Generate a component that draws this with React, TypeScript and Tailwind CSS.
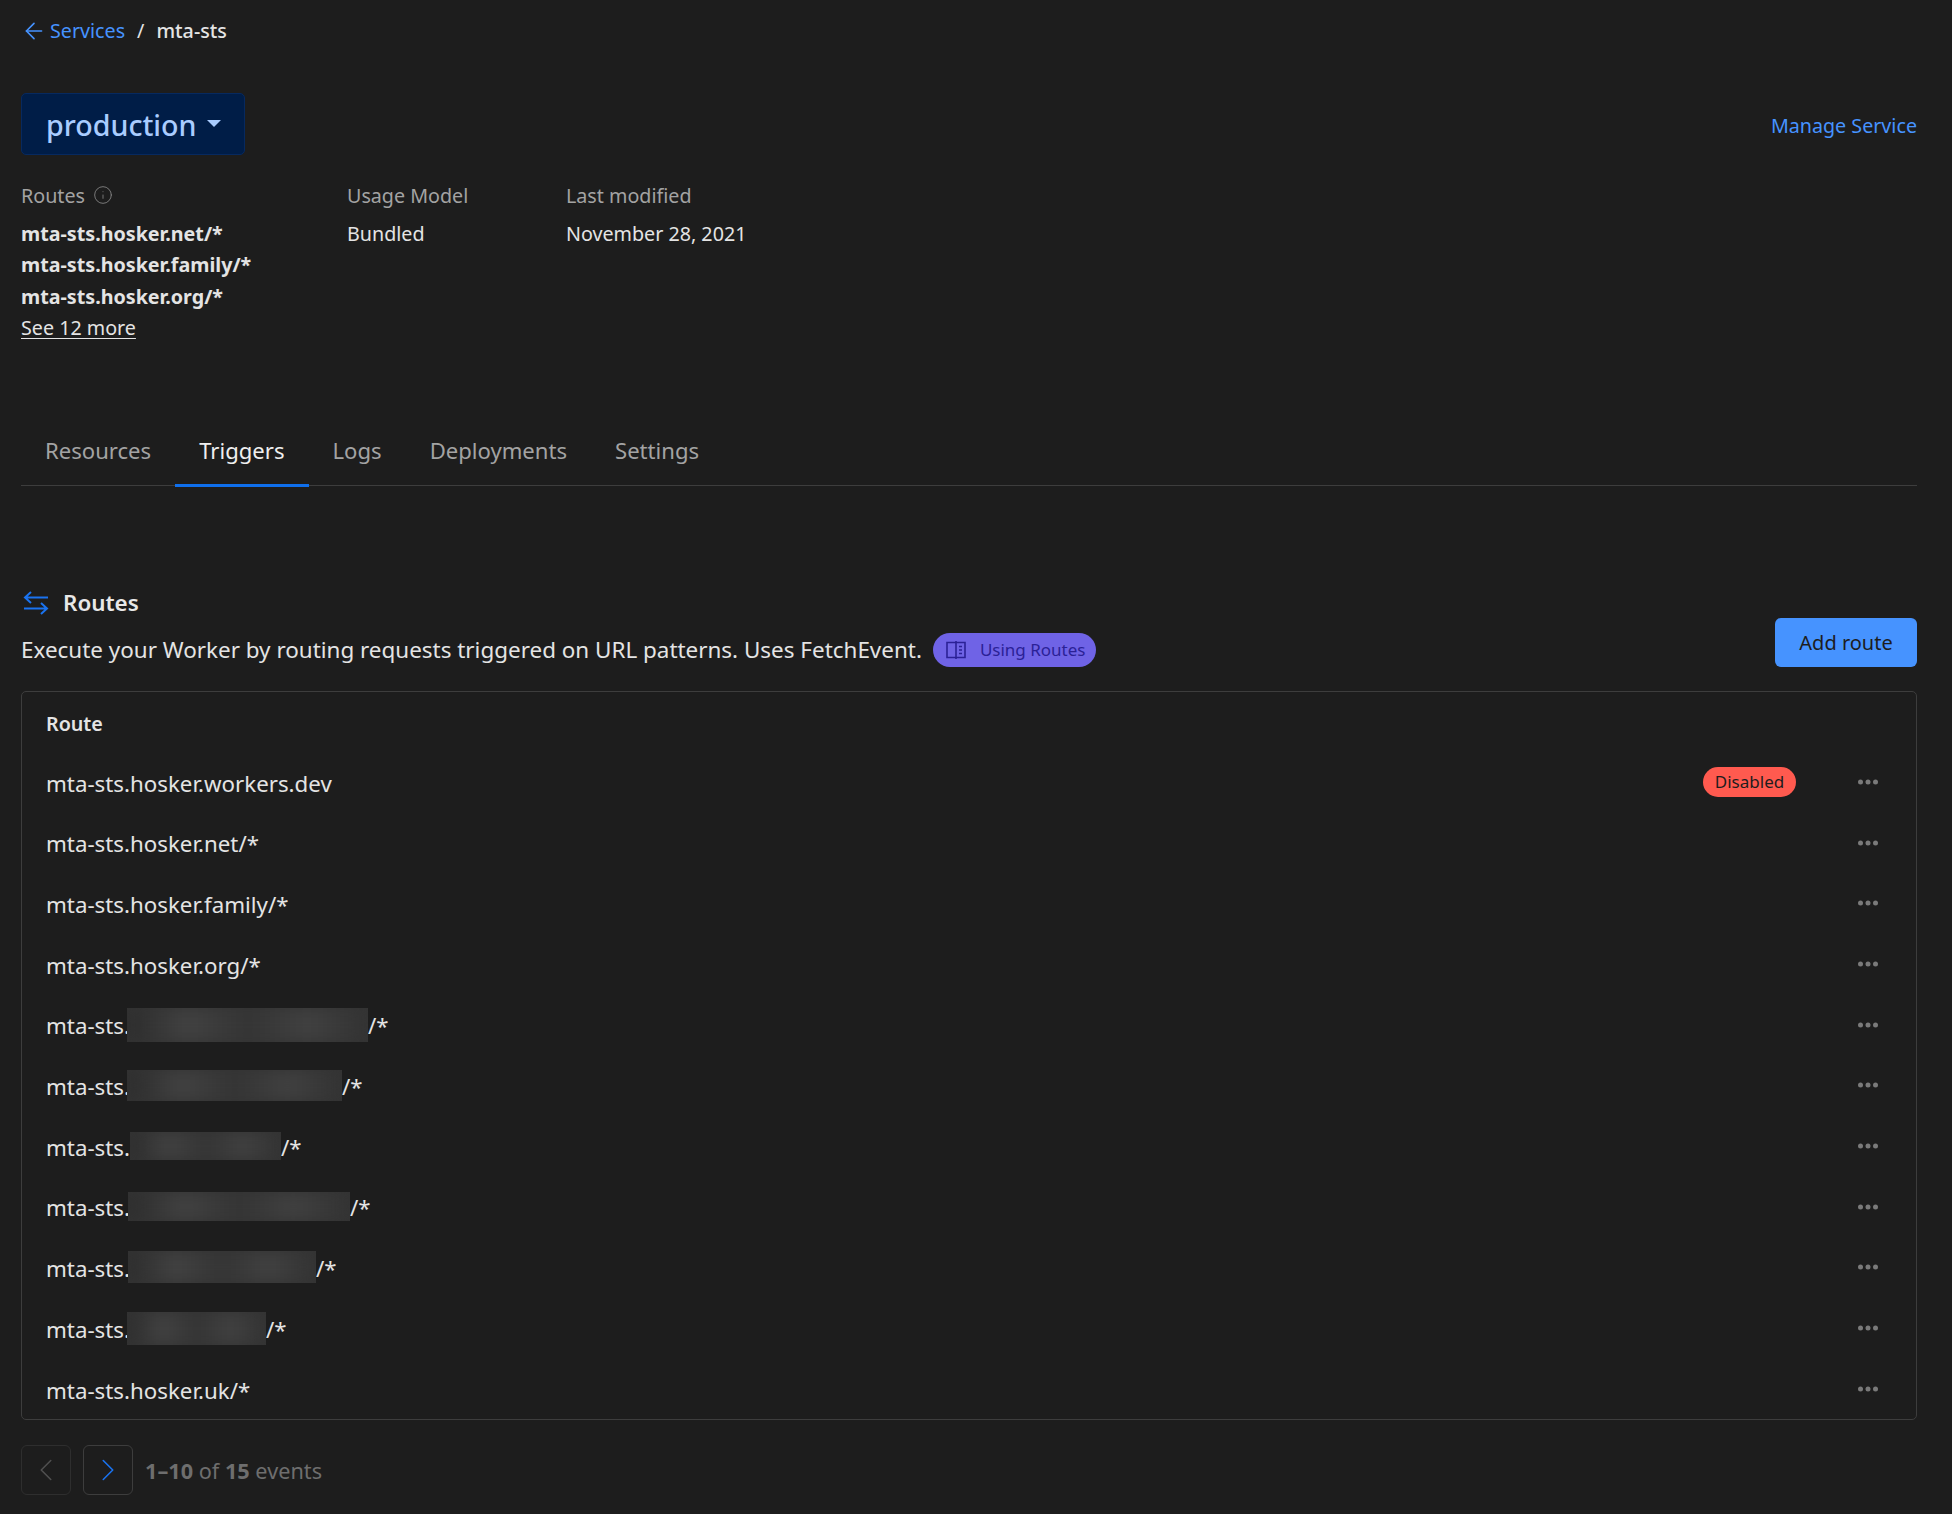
import { ArrowLeft, ChevronLeft, ChevronRight, Info } from "lucide-react";

const tabs = ["Resources", "Triggers", "Logs", "Deployments", "Settings"];

const routes: { prefix: string; blur?: string; badge?: boolean }[] = [
  { prefix: "mta-sts.hosker.workers.dev", badge: true },
  { prefix: "mta-sts.hosker.net/*" },
  { prefix: "mta-sts.hosker.family/*" },
  { prefix: "mta-sts.hosker.org/*" },
  { prefix: "mta-sts.", blur: "-ml-[3px] w-[241px] h-[34px]" },
  { prefix: "mta-sts.", blur: "-ml-[3px] w-[215px] h-[31px]" },
  { prefix: "mta-sts.", blur: "w-[151px] h-[28px]" },
  { prefix: "mta-sts.", blur: "-ml-[2px] w-[222px] h-[29px]" },
  { prefix: "mta-sts.", blur: "-ml-[2px] w-[188px] h-[32px]" },
  { prefix: "mta-sts.", blur: "-ml-[3px] w-[139px] h-[33px]" },
  { prefix: "mta-sts.hosker.uk/*" },
];

function RoutesIcon() {
  return (
    <svg width="26" height="24" viewBox="0 0 26 24" fill="none" stroke="#1a73f0" strokeWidth="2">
      <path d="M25 6.5H2M8 1L2 6.5L8 12" />
      <path d="M1 17.5H24M18 12L24 17.5L18 23" />
    </svg>
  );
}

function BookIcon() {
  return (
    <svg width="20" height="20" viewBox="0 0 20 20" fill="none" stroke="#2b2196" strokeWidth="1.6">
      <path d="M1 2.5H19V17.5H1Z" />
      <path d="M10 1V19" />
      <path d="M13 6.5H16M13 10H16M13 13.5H16" />
    </svg>
  );
}

function Dots() {
  return (
    <svg width="20" height="6" viewBox="0 0 20 6" fill="#7a7a7a">
      <circle cx="2.5" cy="3" r="2.5" />
      <circle cx="10" cy="3" r="2.5" />
      <circle cx="17.5" cy="3" r="2.5" />
    </svg>
  );
}

export default function App() {
  return (
    <div className="w-[1952px] h-[1514px] overflow-hidden bg-[#1d1d1d] pl-[21px] pr-[35px] font-['Noto_Sans',sans-serif] text-[19.7px] text-[#e4e4e4]">
      {/* Breadcrumb */}
      <div className="h-[93px] pt-[16px] flex items-start">
        <div className="flex items-center h-[30px]">
          <ArrowLeft size={26} strokeWidth={1.5} className="text-[#4693ff] mr-[3px]" />
          <span className="text-[#4693ff]">Services</span>
          <span className="mx-[12px]">/</span>
          <span className="font-medium">mta-sts</span>
        </div>
      </div>

      {/* Environment header */}
      <div className="flex items-center justify-between">
        <div className="h-[62px] w-[224px] flex items-center pl-[24px] pt-[2px] rounded-[5px] bg-[#001d47] border border-[#06295f] text-[#a9ccff] text-[28.6px] font-medium">
          production
          <span className="ml-[10px] mb-[4px] border-x-[7px] border-x-transparent border-t-[7px] border-t-[#a9ccff]" />
        </div>
        <a className="text-[#4693ff] pt-[4px]">Manage Service</a>
      </div>

      {/* Meta */}
      <div className="flex mt-[24px] leading-[31.5px]">
        <div className="w-[326px]">
          <div className="flex items-center text-[#a3a3a3] pt-[1px] mb-[6px]">
            Routes <Info size={20} strokeWidth={1} className="ml-[8px] mb-[2px] text-[#8a8a8a]" />
          </div>
          <div className="font-bold">mta-sts.hosker.net/*</div>
          <div className="font-bold">mta-sts.hosker.family/*</div>
          <div className="font-bold">mta-sts.hosker.org/*</div>
          <a className="underline underline-offset-[3px]">See 12 more</a>
        </div>
        <div className="w-[219px]">
          <div className="text-[#a3a3a3] pt-[1px] mb-[6px]">Usage Model</div>
          <div>Bundled</div>
        </div>
        <div>
          <div className="text-[#a3a3a3] pt-[1px] mb-[6px]">Last modified</div>
          <div>November 28, 2021</div>
        </div>
      </div>

      {/* Tabs */}
      <div className="mt-[70px] h-[72px] flex border-b border-[#3d3d3d] text-[22.1px] text-[#a3a3a3]">
        {tabs.map((t) => (
          <div
            key={t}
            className={`px-[24px] h-[73px] flex items-center pt-[4px] border-b-[3px] ${
              t === "Triggers" ? "text-[#efefef] border-[#0f6fec]" : "border-transparent"
            }`}
          >
            {t}
          </div>
        ))}
      </div>

      {/* Routes section */}
      <div className="mt-[103px] flex items-center h-[28px] pl-[2px]">
        <RoutesIcon />
        <span className="ml-[14px] text-[22.4px] font-semibold text-[#e8e8e8]">Routes</span>
      </div>
      <div className="flex items-end justify-between mt-[1px]">
        <div className="flex items-center h-[36px] text-[22.45px] pt-[2px]">
          Execute your Worker by routing requests triggered on URL patterns. Uses FetchEvent.
          <span className="ml-[11px] flex items-center h-[34px] w-[163px] pl-[13px] rounded-full bg-[#6f63e6] text-[17px] text-[#2b2196]">
            <BookIcon />
            <span className="ml-[14px]">Using Routes</span>
          </span>
        </div>
        <button className="w-[142px] h-[49px] pt-[2px] rounded-[6px] bg-[#4693ff] text-[#1d1d1d] text-[20px]">
          Add route
        </button>
      </div>

      {/* Table */}
      <div className="mt-[24px] border border-[#3d3d3d] rounded-[5px]">
        <div className="h-[60px] flex items-center pl-[24px] pt-[4px] font-semibold">Route</div>
        {routes.map((r, i) => (
          <div key={i} className="h-[60.7px] flex items-center pl-[24px] text-[22.3px]">
            <span className="pt-[3px]">{r.prefix}</span>
            {r.blur && (
              <>
                <span className={`${r.blur} relative overflow-hidden bg-[#333333]`}>
                  <span className="block w-full h-full blur-[8px] bg-[linear-gradient(90deg,#2c2c2c,#424242,#353535,#414141,#333333)]" />
                </span>
                <span className="pt-[3px]">/*</span>
              </>
            )}
            <div className="ml-auto flex items-center">
              {r.badge && (
                <span className="mr-[62px] w-[93px] h-[30px] flex items-center justify-center rounded-full bg-[#ff5a4f] text-[#1d1d1d] text-[17px]">
                  Disabled
                </span>
              )}
              <span className="mr-[38px] flex">
                <Dots />
              </span>
            </div>
          </div>
        ))}
      </div>

      {/* Pagination */}
      <div className="mt-[25px] flex items-center">
        <div className="w-[50px] h-[50px] rounded-[6px] border border-[#2e2e2e] flex items-center justify-center">
          <ChevronLeft size={38} strokeWidth={1} className="text-[#505050]" />
        </div>
        <div className="ml-[12px] w-[50px] h-[50px] rounded-[6px] border border-[#3d3d3d] flex items-center justify-center">
          <ChevronRight size={38} strokeWidth={1} className="text-[#1a73f0]" />
        </div>
        <span className="ml-[12px] pt-[2px] text-[21.7px] text-[#6e6e6e]">
          <b className="font-bold">1–10</b> of <b className="font-bold">15</b> events
        </span>
      </div>
    </div>
  );
}
